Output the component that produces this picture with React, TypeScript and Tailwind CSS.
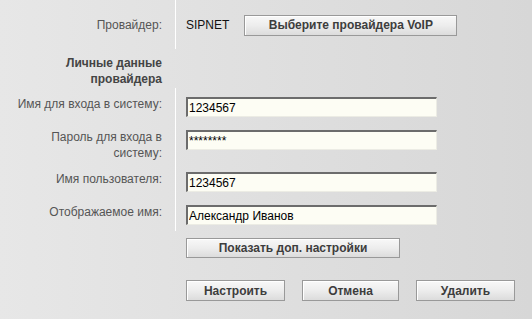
import React from "react";

const btn =
  "border border-[#999999] bg-gradient-to-b from-[#f8f8f8] via-[#ededed] to-[#dcdcdc] shadow-[inset_1px_1px_0_#ffffff] text-[#3d3d3d] font-bold text-[12px] leading-none flex items-center justify-center";

const inputCls =
  "w-[251px] h-[20px] bg-[#fdfdf4] border-t-2 border-l-2 border-b border-r border-t-[#6c6c6c] border-l-[#6c6c6c] border-b-[#ecece4] border-r-[#ecece4] pl-[1px] text-black text-[12px] leading-none outline-none font-['Liberation_Sans',Arial,sans-serif]";

function FieldRow({
  label,
  value,
  h,
}: {
  label: React.ReactNode;
  value: string;
  h: string;
}) {
  return (
    <div className={`grid grid-cols-[175px_1fr] ${h}`}>
      <div className="pt-[8px] pr-[13px] text-right leading-[16px] text-[#555555]">
        {label}
      </div>
      <div className="border-l border-white pt-[9px] pl-[10px]">
        <input className={inputCls} readOnly value={value} />
      </div>
    </div>
  );
}

export default function App() {
  return (
    <div className="w-[532px] h-[319px] overflow-hidden bg-gradient-to-r from-[#e7e7e7] to-[#d7d7d7] font-['Liberation_Sans',Arial,sans-serif] text-[12px]">
      {/* Provider row */}
      <div className="grid grid-cols-[175px_1fr] h-[49px]">
        <div className="flex items-center justify-end pr-[13px] pt-[1px] text-[#555555]">
          Провайдер:
        </div>
        <div className="border-l border-white flex items-center pl-[10px] pt-[1px]">
          <span className="text-[#111111]">SIPNET</span>
          <button className={`${btn} ml-[15px] w-[213px] h-[21px]`}>
            Выберите провайдера VoIP
          </button>
        </div>
      </div>

      {/* Heading */}
      <div className="grid grid-cols-[175px_1fr] h-[39px]">
        <div className="pt-[6px] pr-[13px] text-right leading-[16px] font-bold text-[#444444]">
          Личные данные
          <br />
          провайдера
        </div>
        <div />
      </div>

      <FieldRow label="Имя для входа в систему:" value="1234567" h="h-[33px]" />
      <FieldRow
        label={
          <>
            Пароль для входа в
            <br />
            систему:
          </>
        }
        value="********"
        h="h-[42px]"
      />
      <FieldRow label="Имя пользователя:" value="1234567" h="h-[33px]" />
      <FieldRow label="Отображаемое имя:" value="Александр Иванов" h="h-[35px]" />

      <div className="ml-[186px] pt-[7px]">
        <button className={`${btn} w-[214px] h-[20px]`}>
          Показать доп. настройки
        </button>
        <div className="mt-[22px] flex gap-[17px]">
          <button className={`${btn} w-[99px] h-[21px]`}>Настроить</button>
          <button className={`${btn} w-[97px] h-[21px]`}>Отмена</button>
          <button className={`${btn} w-[99px] h-[21px]`}>Удалить</button>
        </div>
      </div>
    </div>
  );
}
